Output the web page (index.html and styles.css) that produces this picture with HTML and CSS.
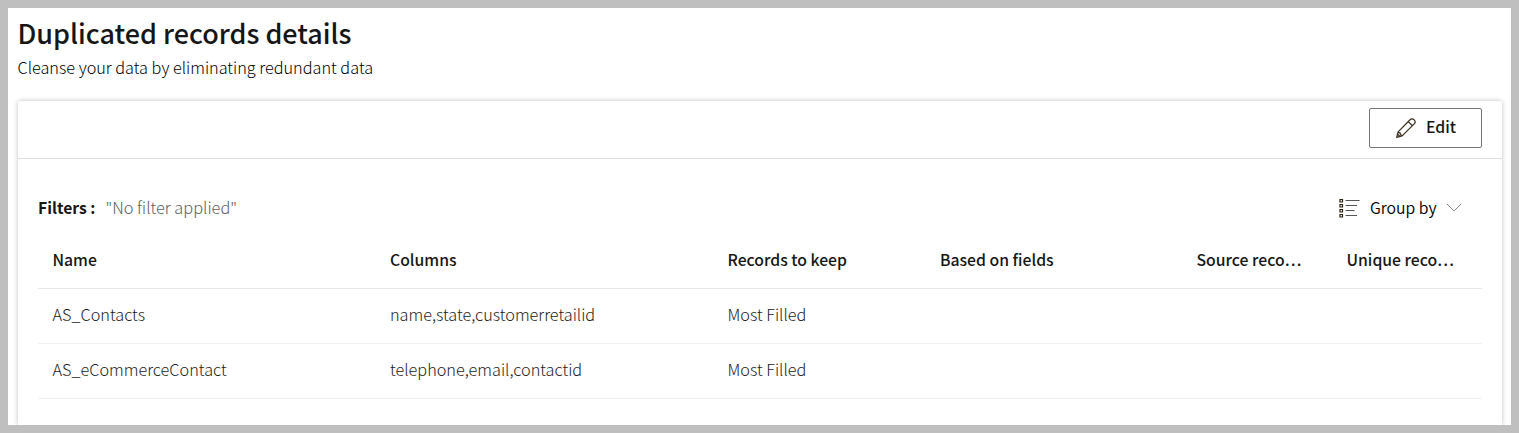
FILE: index.html
```
<!DOCTYPE html>
<html lang="en">
<head>
<meta charset="utf-8">
<title>Duplicated records details</title>
<link rel="stylesheet" href="styles.css">
</head>
<body>
<main class="page">
  <header class="page-header">
    <h1 class="title">Duplicated records details</h1>
    <p class="subtitle">Cleanse your data by eliminating redundant data</p>
  </header>
  <section class="panel">
    <div class="toolbar">
      <button class="edit-button" type="button">
        <svg class="pencil" viewBox="0 0 22 22" width="22" height="22"><path d="M1.700 20.300 3.100 14.900 15.100 2.800a2.900 2.900 0 0 1 4.100 4.100L7.200 18.900ZM3.100 14.900q.6 1.100 2 1-.1 1.900 2.100 3M13.300 4.600l4.100 4.100M1.700 20.300l1-3.200 2.200 2.200Z"/></svg>
        <span class="edit-label">Edit</span>
      </button>
    </div>
    <div class="content">
      <div class="filter-bar">
        <div class="filters"><span class="filters-label">Filters :</span><span class="filters-value">"No filter applied"</span></div>
        <button class="group-button" type="button">
          <svg class="list-icon" viewBox="0 0 21 20" width="21" height="20"><path class="boxes" d="M1 1.500h2.500v2.500h-2.500zM1 6.500h2.500v2.500h-2.500zM1 11.500h2.500v2.500h-2.500zM1 16.500h2.500v2.500h-2.500z"/><path class="lines" d="M6.500 2.500h14M6.500 7.500h11.500M6.500 12.500h9M6.500 17.500h11.500"/></svg>
          <span class="group-label">Group by</span>
          <svg class="chevron" viewBox="0 0 16 10" width="16" height="10"><path d="m1 1 7 7 7-7"/></svg>
        </button>
      </div>
      <table class="records">
        <colgroup><col class="c-name"><col class="c-columns"><col class="c-keep"><col class="c-fields"><col class="c-count"><col class="c-count"></colgroup>
        <thead><tr><th>Name</th><th>Columns</th><th>Records to keep</th><th>Based on fields</th><th>Source reco…</th><th>Unique reco…</th></tr></thead>
        <tbody>
          <tr><td>AS_Contacts</td><td>name,state,customerretailid</td><td>Most Filled</td><td></td><td></td><td></td></tr>
          <tr><td>AS_eCommerceContact</td><td>telephone,email,contactid</td><td>Most Filled</td><td></td><td></td><td></td></tr>
        </tbody>
      </table>
    </div>
  </section>
</main>
</body>
</html>
```
FILE: styles.css
```
* { box-sizing: border-box; }
body { margin: 0; font-family: "Noto Sans CJK SC", sans-serif; font-size: 16px; color: #161616; }
.page { height: 433px; border: 8px solid #bfbfbf; background: #fff; padding: 0 9px 0 10px; display: flex; flex-direction: column; overflow: hidden; }
.page-header { height: 93px; flex: none; padding-top: 5px; }
.title { margin: 0 0 0 -0.5px; font-size: 26.950px; line-height: 39px; font-weight: 500; }
.subtitle { margin: 0 0 0 -0.5px; font-size: 16.250px; line-height: 30px; font-weight: 300; color: #000; }
.panel { flex: 1; background: #fff; border-radius: 3px 3px 0 0; box-shadow: 0 0 5px rgba(0, 0, 0, .25); }
.toolbar { height: 58px; border-bottom: 1px solid #ddd; display: flex; justify-content: flex-end; align-items: flex-start; padding: 7px 20px; }
.edit-button { width: 113px; height: 40px; border: 1px solid #767676; border-radius: 2px; background: #fff; display: flex; align-items: center; justify-content: center; gap: 9px; padding: 0; font: inherit; font-weight: 500; color: #161616; }
.edit-label { line-height: 24px; padding-bottom: 3px; font-size: 15.800px; }
.pencil { fill: none; stroke: #3b3020; stroke-width: 1.25; stroke-linejoin: round; }
.content { padding: 33px 20px 0; }
.filter-bar { height: 31px; display: flex; justify-content: space-between; align-items: center; line-height: 28px; }
.filters { display: flex; align-items: baseline; gap: 10px; padding-bottom: 1px; }
.filters-label { font-weight: 700; font-size: 15.700px; }
.filters-value { font-size: 16.350px; font-weight: 300; color: #606060; }
.group-button { border: 0; background: none; padding: 0 20px 0 0; font: inherit; font-weight: 350; color: #000; display: flex; align-items: center; gap: 9.500px; }
.group-label { font-size: 15.800px; line-height: 26px; padding-top: 1px; }
.list-icon, .chevron { fill: none; }
.boxes { stroke: #2b2110; stroke-width: 1.2; }
.lines { stroke: #555; stroke-width: 1.2; }
.chevron { stroke: #888; }
.records { width: 100%; margin-top: 9px; table-layout: fixed; border-collapse: separate; border-spacing: 0; }
.c-name { width: 337.500px; }
.c-columns { width: 337.500px; }
.c-keep { width: 212.500px; }
.c-fields { width: 256.500px; }
.c-count { width: 150px; }
.records th, .records td { text-align: left; white-space: nowrap; line-height: 24px; }
.records th { height: 57px; padding: 0 14.500px; font-size: 15.750px; font-weight: 500; border-bottom: 1px solid #e8e8e8; }
.records td { height: 55px; padding: 0 14.500px 4px; font-size: 16.250px; font-weight: 300; color: #1c1c1c; border-bottom: 1px solid #f0f0f0; }
```
